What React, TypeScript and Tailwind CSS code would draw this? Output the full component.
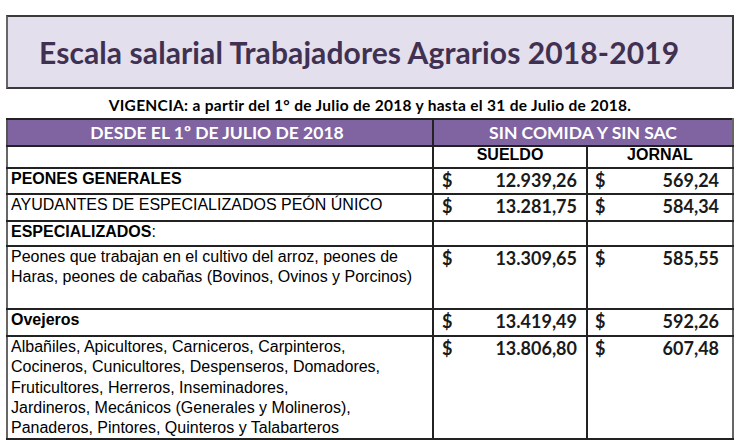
export default function App() {
  const cal = { fontFamily: "Lato, 'Open Sans', sans-serif" };
  const arial = { fontFamily: "'Liberation Sans', Arial, sans-serif" };
  const rows: { label: React.ReactNode; h: number; sueldo?: string; jornal?: string }[] = [
    { label: <b>PEONES GENERALES</b>, h: 26, sueldo: "12.939,26", jornal: "569,24" },
    { label: "AYUDANTES DE ESPECIALIZADOS PEÓN ÚNICO", h: 27, sueldo: "13.281,75", jornal: "584,34" },
    { label: <><b>ESPECIALIZADOS</b>:</>, h: 25 },
    {
      label: (
        <>
          Peones que trabajan en el cultivo del arroz, peones de
          <br />
          Haras, peones de cabañas (Bovinos, Ovinos y Porcinos)
        </>
      ),
      h: 63,
      sueldo: "13.309,65",
      jornal: "585,55",
    },
    { label: <b>Ovejeros</b>, h: 27, sueldo: "13.419,49", jornal: "592,26" },
    {
      label: (
        <>
          Albañiles, Apicultores, Carniceros, Carpinteros,
          <br />
          Cocineros, Cunicultores, Despenseros, Domadores,
          <br />
          Fruticultores, Herreros, Inseminadores,
          <br />
          Jardineros, Mecánicos (Generales y Molineros),
          <br />
          Panaderos, Pintores, Quinteros y Talabarteros
        </>
      ),
      h: 102,
      sueldo: "13.806,80",
      jornal: "607,48",
    },
  ];

  return (
    <div className="w-[739px] h-[440px] overflow-hidden bg-white pt-[15px] pl-[6px]">
      <div className="w-[728px] h-[74px] border-2 border-[#3a3a3a] border-l-[#666] bg-[#e4dfec] flex items-center pl-[31px]">
        <h1 style={cal} className="text-[30px] font-bold text-[#403152] tracking-[0.1px]">
          Escala salarial Trabajadores Agrarios 2018-2019
        </h1>
      </div>
      <p
        style={cal}
        className="w-[728px] text-center text-[15.5px] font-bold text-black tracking-[0.3px] mt-[4px] h-[25px] leading-[25px]"
      >
        VIGENCIA: a partir del 1° de Julio de 2018 y hasta el 31 de Julio de 2018.
      </p>
      <table className="w-[726px] border-collapse table-fixed">
        <colgroup>
          <col className="w-[426px]" />
          <col className="w-[154px]" />
          <col className="w-[146px]" />
        </colgroup>
        <tbody>
          <tr className="h-[27px] bg-[#8064a2] text-white text-[17.5px] font-bold leading-[22px]" style={cal}>
            <td className="border-2 border-[#222] border-l-[#555] text-center p-0 pr-[6px]">DESDE EL 1º DE JULIO DE 2018</td>
            <td colSpan={2} className="border-2 border-[#222] border-r-[#666] text-center p-0">
              SIN COMIDA Y SIN SAC
            </td>
          </tr>
          <tr className="h-[22px] text-[16px] font-bold text-black" style={arial}>
            <td className="border-2 border-[#222] border-l-[#666] p-0" />
            <td className="border-2 border-[#222] text-center p-0 leading-[16px] align-top">SUELDO</td>
            <td className="border-2 border-[#222] border-r-[#666] text-center p-0 leading-[16px] align-top">JORNAL</td>
          </tr>
          {rows.map((r, i) => (
            <tr key={i} style={{ height: r.h }}>
              <td
                style={arial}
                className="border-2 border-[#222] border-l-[#666] align-top px-[3px] pt-0 text-[16px] leading-[20.3px] text-black"
              >
                {r.label}
              </td>
              <td style={cal} className="border-2 border-[#222] align-top p-0 text-[18px] leading-[22px] font-bold text-[#1a1a1a]">
                {r.sueldo && (
                  <div className="flex justify-between pl-[8px] pr-[9px]">
                    <span>$</span>
                    <span>{r.sueldo}</span>
                  </div>
                )}
              </td>
              <td
                style={cal}
                className="border-2 border-[#222] border-r-[#666] align-top p-0 text-[18px] leading-[22px] font-bold text-[#1a1a1a]"
              >
                {r.jornal && (
                  <div className="flex justify-between pl-[7px] pr-[13px]">
                    <span>$</span>
                    <span>{r.jornal}</span>
                  </div>
                )}
              </td>
            </tr>
          ))}
          <tr className="h-[20px]">
            <td className="border-2 border-[#222] border-l-[#666] p-0" />
            <td className="border-2 border-[#222] p-0" />
            <td className="border-2 border-[#222] border-r-[#666] p-0" />
          </tr>
        </tbody>
      </table>
    </div>
  );
}
